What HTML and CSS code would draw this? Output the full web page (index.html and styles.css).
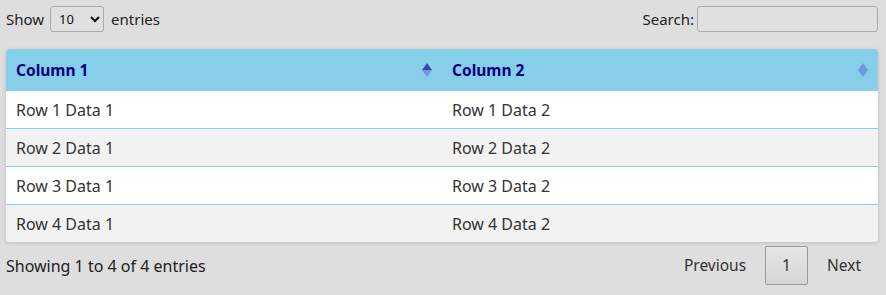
FILE: index.html
```html
<!DOCTYPE html>
<html lang="en">
<head>
    <meta charset="UTF-8">
    <meta name="viewport" content="width=device-width, initial-scale=1.0">
    <title>Table</title>
    <link rel="stylesheet" href="styles.css">
</head>
<body>
    <div id="wrapper">
        <div class="top_bar">
            <label class="length">Show
                <select>
                    <option>10</option>
                    <option>25</option>
                    <option>50</option>
                </select>
                entries</label>
            <label class="search">Search:<input type="search"></label>
        </div>

        <div class="table_box">
            <table>
                <thead>
                    <tr>
                        <th class="sort_asc">Column 1<span class="arrows"><i class="up"></i><i class="down"></i></span></th>
                        <th>Column 2<span class="arrows"><i class="up"></i><i class="down"></i></span></th>
                    </tr>
                </thead>
                <tbody>
                    <tr><td>Row 1 Data 1</td><td>Row 1 Data 2</td></tr>
                    <tr><td>Row 2 Data 1</td><td>Row 2 Data 2</td></tr>
                    <tr><td>Row 3 Data 1</td><td>Row 3 Data 2</td></tr>
                    <tr><td>Row 4 Data 1</td><td>Row 4 Data 2</td></tr>
                </tbody>
            </table>
        </div>

        <div class="bottom_bar">
            <div class="info">Showing 1 to 4 of 4 entries</div>
            <div class="paging">
                <a class="page_btn">Previous</a>
                <a class="page_btn current">1</a>
                <a class="page_btn">Next</a>
            </div>
        </div>
    </div>
</body>
</html>
```

FILE: styles.css
```css
* {font-family: 'Noto Sans', 'Noto Sans CJK KR', sans-serif;}

body{
    margin: 0;
    background: #dedede;
    color: #333;
    font-size: 16px;
}

#wrapper{
    padding: 6px 8px 0 6px;
}

.top_bar{
    display: flex;
    justify-content: space-between;
    align-items: center;
    height: 26px;
    font-size: 15px;
}

.length, .search{
    display: flex;
    align-items: center;
    color: #222;
}

.length select{
    width: 54px;
    height: 26px;
    margin: 0 7px 0 6px;
    padding: 0 4px;
    border: 1px solid #aaa;
    border-radius: 3px;
    background: #e0e0e0;
    font-size: 13px;
    color: #111;
}

.search input{
    width: 181px;
    height: 26px;
    box-sizing: border-box;
    margin-left: 3px;
    border: 1px solid #aaa;
    border-radius: 3px;
    background: #e0e0e0;
}

.table_box{
    margin-top: 17px;
    border-radius: 4px;
    overflow: hidden;
    box-shadow: 0 1px 4px rgba(0, 0, 0, 0.15);
}

table{
    width: 100%;
    border-collapse: collapse;
    table-layout: fixed;
}

th{
    position: relative;
    height: 42px;
    padding: 0 10px;
    background: #87ceeb;
    color: #000080;
    text-align: left;
    font-weight: bold;
    font-size: 15.5px;
}

td{
    height: 37px;
    padding: 0 10px;
    color: #333;
}

tbody tr{
    background: #fff;
    border-top: 1px solid #87ceeb;
}

tbody tr:first-child{
    border-top: none;
}

tbody tr:nth-child(even){
    background: #f2f2f2;
}

/* sort arrows in the header cells */
.arrows{
    position: absolute;
    right: 10px;
    top: 14px;
    display: flex;
    flex-direction: column;
}

.arrows i{
    width: 0;
    height: 0;
    border-left: 5.5px solid transparent;
    border-right: 5.5px solid transparent;
}

.arrows .up{
    border-bottom: 7px solid #6c9ad8;
}

.arrows .down{
    border-top: 7px solid #6c9ad8;
}

.sort_asc .arrows .up{
    border-bottom-color: #3949ab;
}

.bottom_bar{
    display: flex;
    justify-content: space-between;
    align-items: center;
    margin-top: 4px;
}

.info{
    color: #222;
}

.paging{
    display: flex;
    align-items: center;
    font-size: 15.5px;
}

.page_btn{
    display: inline-block;
    padding: 9px 16px;
    margin-left: 2px;
    border: 1px solid transparent;
    border-radius: 2px;
    color: #333;
    line-height: 19px;
}

.page_btn.current{
    border-color: #999;
    background: linear-gradient(#e6e6e6, #d6d6d6);
}
```
